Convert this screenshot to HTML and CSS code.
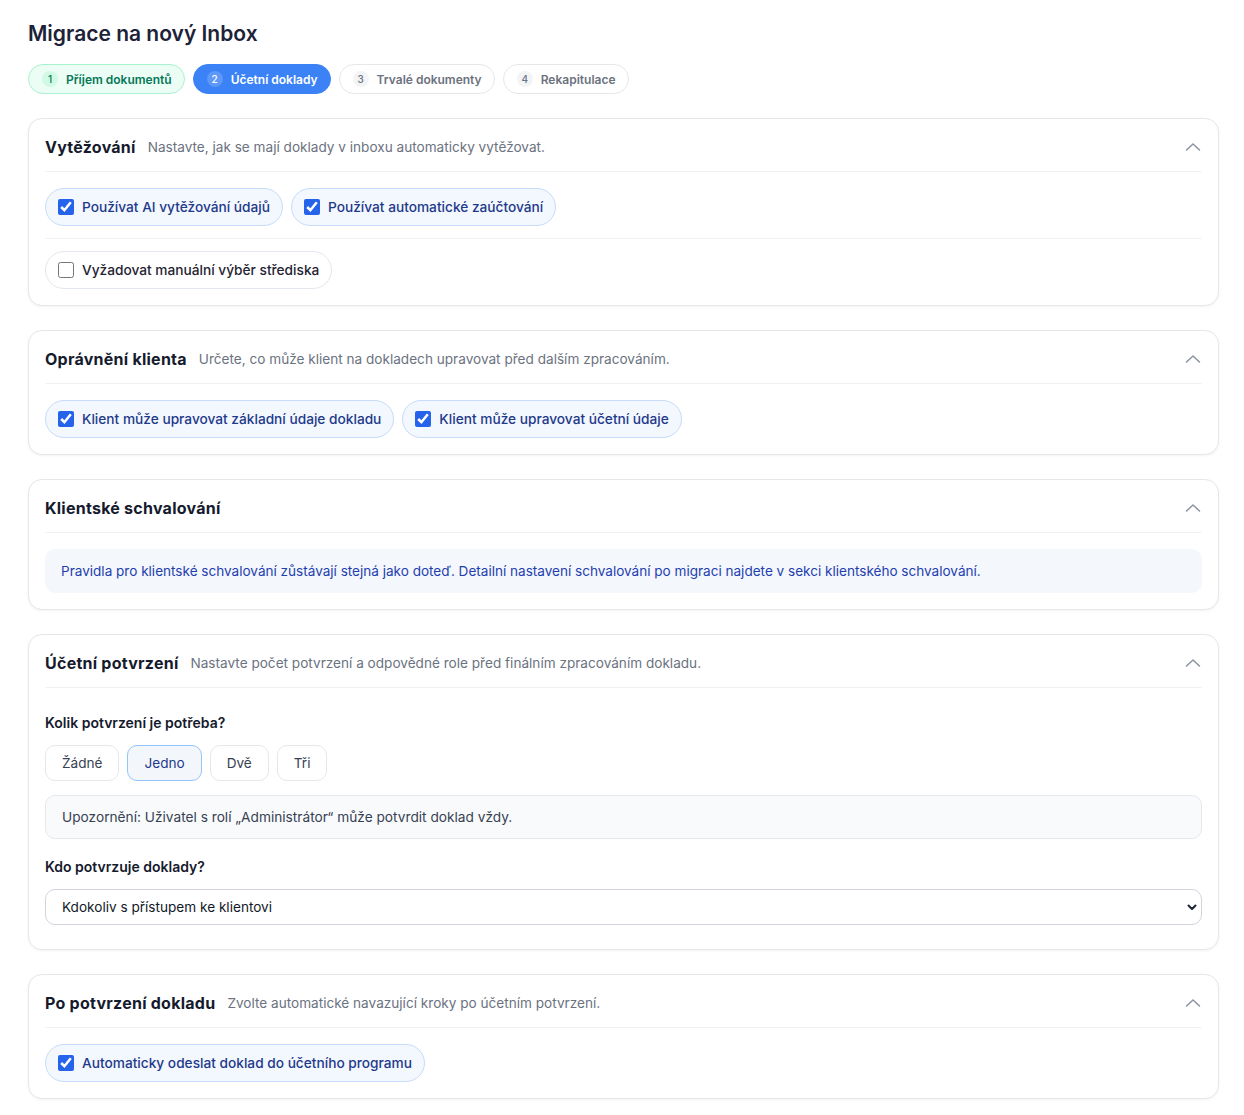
FILE: index.html
```html
<!DOCTYPE html>
<html lang="cs">
<head>
  <meta charset="UTF-8">
  <title>Migrace na nový Inbox</title>
  <link rel="stylesheet" href="styles.css">
</head>
<body>
  <div class="page">
    <h1 class="page-title">Migrace na nový Inbox</h1>

    <div class="steps">
      <div class="step done"><span class="num">1</span>Příjem dokumentů</div>
      <div class="step active"><span class="num">2</span>Účetní doklady</div>
      <div class="step"><span class="num">3</span>Trvalé dokumenty</div>
      <div class="step"><span class="num">4</span>Rekapitulace</div>
    </div>

    <!-- Vytěžování -->
    <section class="card">
      <div class="card-head">
        <h2>Vytěžování</h2>
        <p class="hint">Nastavte, jak se mají doklady v inboxu automaticky vytěžovat.</p>
        <svg class="chevron" width="20" height="20" viewBox="0 0 20 20"><path d="M3.5 13l6.5-6 6.5 6" fill="none" stroke="currentColor" stroke-width="1.5" stroke-linecap="round" stroke-linejoin="round"/></svg>
      </div>
      <div class="card-body">
        <div class="pill-row">
          <label class="pill on"><input type="checkbox" checked>Používat AI vytěžování údajů</label>
          <label class="pill on"><input type="checkbox" checked>Používat automatické zaúčtování</label>
        </div>
        <hr class="sep">
        <div class="pill-row">
          <label class="pill"><input type="checkbox">Vyžadovat manuální výběr střediska</label>
        </div>
      </div>
    </section>

    <!-- Oprávnění klienta -->
    <section class="card">
      <div class="card-head">
        <h2>Oprávnění klienta</h2>
        <p class="hint">Určete, co může klient na dokladech upravovat před dalším zpracováním.</p>
        <svg class="chevron" width="20" height="20" viewBox="0 0 20 20"><path d="M3.5 13l6.5-6 6.5 6" fill="none" stroke="currentColor" stroke-width="1.5" stroke-linecap="round" stroke-linejoin="round"/></svg>
      </div>
      <div class="card-body">
        <div class="pill-row">
          <label class="pill on"><input type="checkbox" checked>Klient může upravovat základní údaje dokladu</label>
          <label class="pill on"><input type="checkbox" checked>Klient může upravovat účetní údaje</label>
        </div>
      </div>
    </section>

    <!-- Klientské schvalování -->
    <section class="card">
      <div class="card-head">
        <h2>Klientské schvalování</h2>
        <svg class="chevron" width="20" height="20" viewBox="0 0 20 20"><path d="M3.5 13l6.5-6 6.5 6" fill="none" stroke="currentColor" stroke-width="1.5" stroke-linecap="round" stroke-linejoin="round"/></svg>
      </div>
      <div class="card-body">
        <div class="info">Pravidla pro klientské schvalování zůstávají stejná jako doteď. Detailní nastavení schvalování po migraci najdete v sekci klientského schvalování.</div>
      </div>
    </section>

    <!-- Účetní potvrzení -->
    <section class="card">
      <div class="card-head">
        <h2>Účetní potvrzení</h2>
        <p class="hint">Nastavte počet potvrzení a odpovědné role před finálním zpracováním dokladu.</p>
        <svg class="chevron" width="20" height="20" viewBox="0 0 20 20"><path d="M3.5 13l6.5-6 6.5 6" fill="none" stroke="currentColor" stroke-width="1.5" stroke-linecap="round" stroke-linejoin="round"/></svg>
      </div>
      <div class="card-body fields">
        <div class="field">
          <div class="field-label">Kolik potvrzení je potřeba?</div>
          <div class="choices">
            <button class="choice">Žádné</button>
            <button class="choice selected">Jedno</button>
            <button class="choice">Dvě</button>
            <button class="choice">Tři</button>
          </div>
          <div class="notice">Upozornění: Uživatel s rolí „Administrátor“ může potvrdit doklad vždy.</div>
        </div>
        <div class="field">
          <div class="field-label">Kdo potvrzuje doklady?</div>
          <div class="select-wrap">
            <select class="select">
              <option>Kdokoliv s přístupem ke klientovi</option>
            </select>
            <svg class="select-arrow" width="12" height="12" viewBox="0 0 12 12"><path d="M2.5 4.5L6 8l3.5-3.5" fill="none" stroke="currentColor" stroke-width="2" stroke-linecap="round" stroke-linejoin="round"/></svg>
          </div>
        </div>
      </div>
    </section>

    <!-- Po potvrzení dokladu -->
    <section class="card">
      <div class="card-head">
        <h2>Po potvrzení dokladu</h2>
        <p class="hint">Zvolte automatické navazující kroky po účetním potvrzení.</p>
        <svg class="chevron" width="20" height="20" viewBox="0 0 20 20"><path d="M3.5 13l6.5-6 6.5 6" fill="none" stroke="currentColor" stroke-width="1.5" stroke-linecap="round" stroke-linejoin="round"/></svg>
      </div>
      <div class="card-body">
        <div class="pill-row">
          <label class="pill on"><input type="checkbox" checked>Automaticky odeslat doklad do účetního programu</label>
        </div>
      </div>
    </section>
  </div>
</body>
</html>
```

FILE: styles.css
```css
* {
  box-sizing: border-box;
}
body {
  margin: 0;
  background: #fff;
  font-family: Inter, "Noto Sans", sans-serif;
  color: #1f2433;
}
.page {
  padding: 20px 25px 16px 28px;
  display: flex;
  flex-direction: column;
  gap: 24px;
}
.page-title {
  margin: 0 0 -8px;
  font-size: 21px;
  line-height: 28px;
  font-weight: 600;
  color: #1d2238;
}

/* kroky průvodce */
.steps {
  display: flex;
  gap: 8px;
}
.step {
  display: flex;
  align-items: center;
  gap: 8px;
  height: 30px;
  padding: 0 12px 0 13px;
  border: 1px solid #e5e7eb;
  border-radius: 999px;
  font-size: 12px;
  font-weight: 600;
  color: #6b7280;
  background: #fff;
}
.step .num {
  width: 16px;
  height: 16px;
  border-radius: 50%;
  background: #f3f4f6;
  font-size: 10px;
  font-weight: 500;
  display: flex;
  align-items: center;
  justify-content: center;
}
.step.done {
  background: #ecfdf5;
  border-color: #a7f3d0;
  color: #047857;
}
.step.done .num {
  background: #d1fae5;
}
.step.active {
  background: #3b82f6;
  border-color: #3b82f6;
  color: #fff;
}
.step.active .num {
  background: #5e98f8;
}

/* karty */
.card {
  border: 1px solid #e5e7eb;
  border-radius: 14px;
  background: #fff;
  box-shadow: 0 1px 3px rgba(17, 24, 39, 0.05);
}
.card-head {
  display: flex;
  align-items: center;
  gap: 12px;
  margin: 0 16px;
  padding: 16px 0 12px;
  border-bottom: 1px solid #f0f2f5;
}
.card-head h2 {
  margin: 0;
  font-size: 16px;
  line-height: 24px;
  font-weight: 700;
  letter-spacing: 0.25px;
  color: #151a2d;
}
.hint {
  margin: 0;
  font-size: 13.6px;
  color: #6b7280;
}
.chevron {
  margin-left: auto;
  margin-right: -1px;
  color: #8b93a1;
}
.card-body {
  padding: 16px;
}

.pill-row {
  display: flex;
  gap: 8px;
}
.pill {
  display: flex;
  align-items: center;
  gap: 8px;
  height: 38px;
  padding: 0 12px;
  border: 1px solid #e3e7ee;
  border-radius: 999px;
  font-size: 13.7px;
  font-weight: 500;
  color: #1f2433;
  background: #fff;
}
.pill.on {
  background: #f3f7fe;
  border-color: #c7dbfa;
  color: #1e3a8a;
}
.pill input {
  margin: 0;
  width: 16px;
  height: 16px;
  accent-color: #2563eb;
}
.sep {
  border: 0;
  border-top: 1px solid #f0f2f5;
  margin: 12px 0;
}

.info {
  padding: 12px 16px;
  border-radius: 10px;
  background: #f4f7fc;
  color: #1e40af;
  font-size: 13.55px;
  line-height: 20px;
}

/* formulářová pole */
.fields {
  padding: 25px 16px 24px;
  display: flex;
  flex-direction: column;
  gap: 18px;
}
.field {
  display: flex;
  flex-direction: column;
  gap: 12px;
}
.field-label {
  font-size: 14px;
  line-height: 20px;
  font-weight: 600;
  color: #151a2d;
}
.choices {
  display: flex;
  gap: 8px;
}
.choice {
  height: 36px;
  padding: 0 16px;
  border: 1px solid #e5e7eb;
  border-radius: 10px;
  background: #fff;
  font-family: inherit;
  font-size: 13.6px;
  color: #374151;
}
.choice.selected {
  background: #f3f6fb;
  border-color: #93c5fd;
  color: #1e3a8a;
}
.notice {
  margin-top: 2px;
  padding: 12px 16px;
  border: 1px solid #e5e7eb;
  border-radius: 10px;
  background: #f8fafc;
  font-size: 13.7px;
  line-height: 18px;
  color: #374151;
}
.select-wrap {
  position: relative;
}
.select {
  width: 100%;
  height: 36px;
  padding: 0 16px;
  border: 1px solid #d1d5db;
  border-radius: 10px;
  background: #fff;
  font-family: inherit;
  font-size: 13.6px;
  color: #111827;
  appearance: none;
}
.select-arrow {
  position: absolute;
  right: 4px;
  top: 12px;
  color: #1f2433;
}
```
